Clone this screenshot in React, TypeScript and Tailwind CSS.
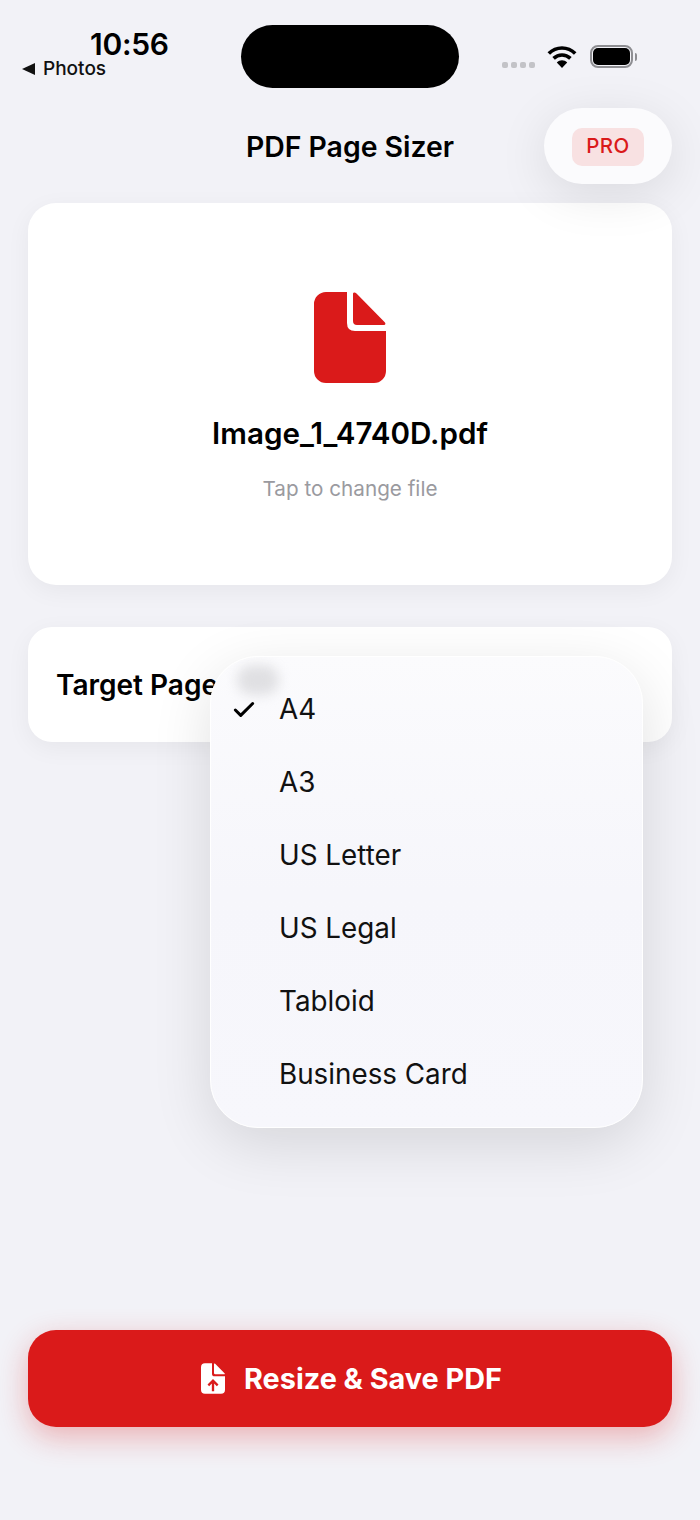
import React from "react";
import { Check } from "lucide-react";

const sizes = ["A4", "A3", "US Letter", "US Legal", "Tabloid", "Business Card"];

const DocIcon = ({
  className,
  children,
}: {
  className: string;
  children?: React.ReactNode;
}) => (
  <svg viewBox="0 0 72 91" className={className} fill="currentColor">
    <path d="M12 0H33V31Q33 39 41 39H72V79A12 12 0 0 1 60 91H12A12 12 0 0 1 0 79V12A12 12 0 0 1 12 0Z" />
    <path d="M39 2C39 0 41 0 42.5 1.500L70.500 30C72 31.500 71.500 33 70 33H43Q39 33 39 29Z" />
    {children}
  </svg>
);

const StatusBar = () => (
  <div className="flex h-[108px] pt-[25px] shrink-0">
    <div className="w-[241px] shrink-0 flex flex-col">
      <div className="ml-[90px] text-[30px] leading-[38px] font-semibold tracking-[-0.3px] text-black">
        10:56
      </div>
      <div className="flex items-center ml-[22px] -mt-[6px] h-[24px]">
        <svg viewBox="0 0 13 12" className="w-[13px] h-[12px] text-[#111]" fill="currentColor">
          <path d="M0 6L13 0V12Z" />
        </svg>
        <span className="ml-[8px] text-[19px] leading-[24px] font-medium text-[#111]">
          Photos
        </span>
      </div>
    </div>
    <div className="w-[218px] h-[63px] shrink-0 rounded-full bg-black" />
    <div className="flex items-start pl-[43px] pt-[20px]">
      <div className="flex gap-[3px] mt-[17px]">
        <div className="w-[6px] h-[6px] rounded-[2px] bg-[#c3c3c7]" />
        <div className="w-[6px] h-[6px] rounded-[2px] bg-[#c3c3c7]" />
        <div className="w-[6px] h-[6px] rounded-[2px] bg-[#c3c3c7]" />
        <div className="w-[6px] h-[6px] rounded-[2px] bg-[#c3c3c7]" />
      </div>
      <svg viewBox="0 0 30 22" className="w-[30px] h-[22px] ml-[12px] mt-[1px]" fill="none" stroke="black" strokeWidth="3.600">
        <path d="M1.800 7.600C9.200 0.200 20.800 0.200 28.200 7.600" />
        <path d="M6.600 12.400C11.400 7.800 18.600 7.800 23.400 12.400" />
        <path d="M15 22L9.800 16.400C12.800 13.600 17.200 13.600 20.200 16.400Z" fill="black" stroke="none" />
      </svg>
      <div className="flex items-center ml-[13px]">
        <div className="w-[43px] h-[23px] rounded-[8px] border-2 border-[#8e8e92] p-[1px] bg-[#f2f2f7]">
          <div className="w-full h-full rounded-[5px] bg-black" />
        </div>
        <div className="w-[2px] h-[8px] ml-[2px] rounded-r-full bg-[#8e8e92]" />
      </div>
    </div>
  </div>
);

export default function App() {
  return (
    <div className="w-[700px] h-[1520px] bg-[#f2f2f7] flex flex-col overflow-hidden font-[family-name:Inter,sans-serif]">
      <StatusBar />

      <div className="relative z-10 grid grid-cols-[1fr_auto_1fr] items-start px-[28px] h-[95px] shrink-0">
        <div />
        <h1 className="mt-[20px] text-[28.400px] leading-[38px] font-semibold text-black whitespace-nowrap">
          PDF Page Sizer
        </h1>
        <div className="justify-self-end w-[128px] h-[76px] rounded-full bg-[#fbfbfd] flex items-center justify-center shadow-[0_10px_50px_rgba(0,0,0,0.1)]">
          <div className="mt-[1px] w-[72px] h-[38px] rounded-[10px] bg-[#f8e1e2] flex items-center justify-center text-[20.500px] font-medium tracking-[0.5px] text-[#da1a1a]">
            PRO
          </div>
        </div>
      </div>

      <div className="mx-[28px] h-[382px] shrink-0 rounded-[28px] bg-white flex flex-col items-center pt-[89px] shadow-[0_6px_24px_rgba(0,0,0,0.05)]">
        <DocIcon className="w-[72px] h-[91px] text-[#da1a1a]" />
        <div className="mt-[30px] text-[29.600px] leading-[40px] font-semibold text-black">
          Image_1_4740D.pdf
        </div>
        <div className="mt-[20px] text-[20.700px] leading-[32px] text-[#9a9a9f]">
          Tap to change file
        </div>
      </div>

      <div className="relative z-10 mx-[28px] mt-[42px] h-[115px] shrink-0 rounded-[24px] bg-white flex items-center pl-[28px] pr-[29px] shadow-[0_6px_24px_rgba(0,0,0,0.05)]">
        <span className="text-[28px] font-semibold text-black">Target Page</span>

        <div className="absolute left-[182px] top-[29px] w-[433px] h-[472px] rounded-[48px] border border-white bg-gradient-to-b from-[#fbfbfd] via-[#f6f6fb] to-[#f7f7fc] pt-[16px] overflow-hidden">
          <div className="absolute left-[26px] top-[8px] w-[42px] h-[30px] rounded-full bg-[#e0e0e3] blur-[6px]" />
          {sizes.map((size, i) => (
            <div key={size} className="relative flex items-center h-[73px] pl-[68px]">
              {i === 0 && (
                <Check className="absolute left-[20px] w-[26px] h-[26px] text-black" strokeWidth={2.800} />
              )}
              <span className="text-[27.800px] text-[#111]">{size}</span>
            </div>
          ))}
        </div>
        <div className="absolute left-[182px] top-[29px] -z-10 w-[433px] h-[472px] rounded-[48px] shadow-[0_16px_60px_rgba(0,0,0,0.12)]" />
      </div>

      <div className="mx-[28px] mt-auto mb-[93px] h-[97px] shrink-0 rounded-[28px] bg-[#da1a1a] flex items-center justify-center gap-[19px] pl-[3px] shadow-[0_10px_30px_rgba(218,26,26,0.3)]">
        <DocIcon className="w-[24px] h-[31px] text-white">
          <path d="M36 84V54M22 66L36 52L50 66" fill="none" stroke="#da1a1a" strokeWidth="7" />
        </DocIcon>
        <span className="text-[28.800px] font-bold text-white">Resize &amp; Save PDF</span>
      </div>
    </div>
  );
}
